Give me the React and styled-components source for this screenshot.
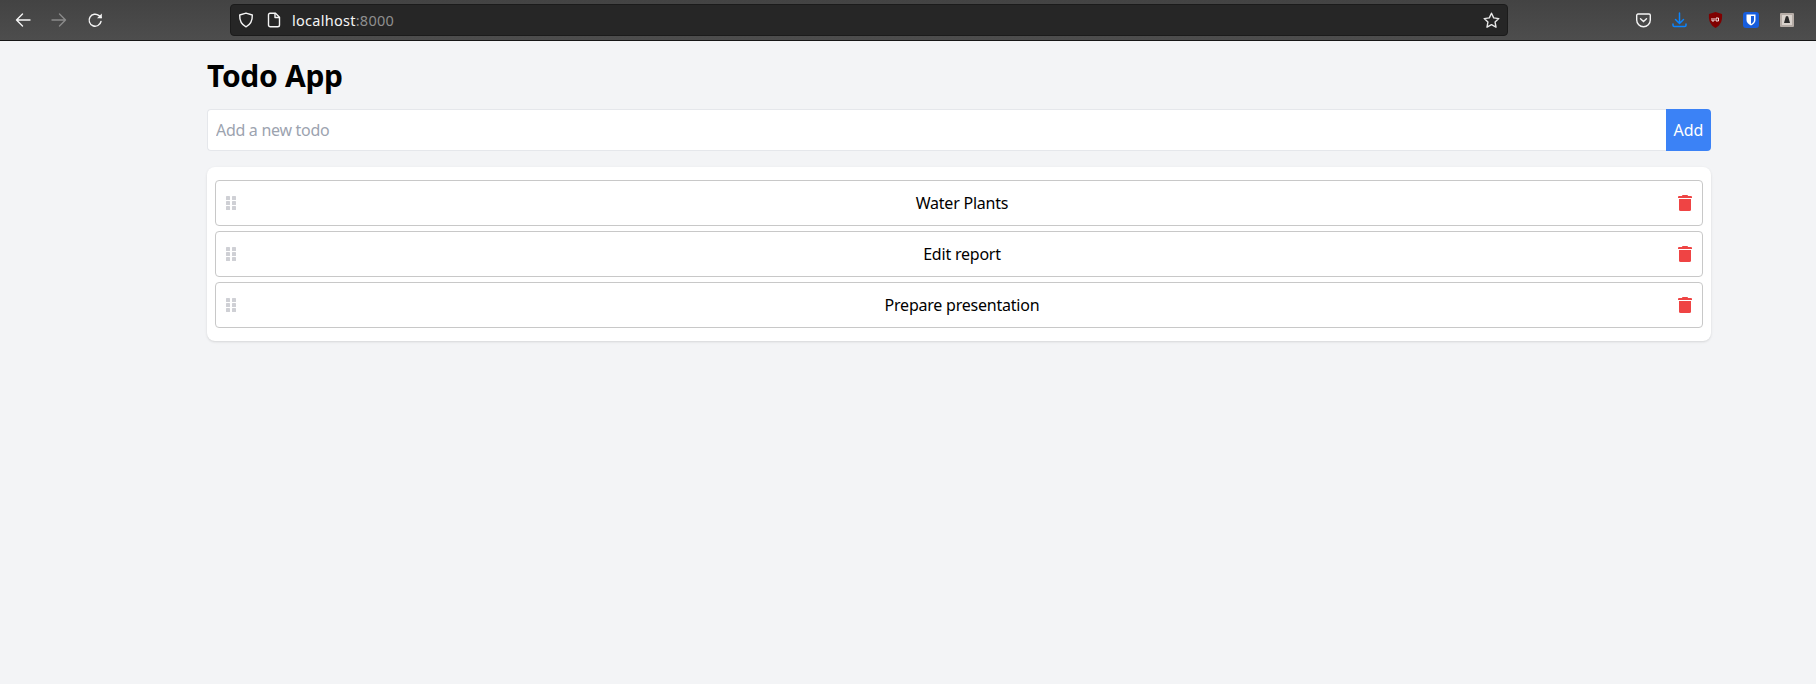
import React from "react";
import styled, { createGlobalStyle } from "styled-components";

const Global = createGlobalStyle`
  html, body { margin: 0; padding: 0; background: #f3f4f6; }
  body { font-family: "Noto Sans", "Open Sans", sans-serif; color: #000; }
  * { box-sizing: border-box; }
`;
const Page = styled.div`
  width: 1816px;
  height: 684px;
  overflow: hidden;
  background: #f3f4f6;
`;
const Toolbar = styled.div`
  height: 41px;
  display: flex;
  align-items: center;
  background: linear-gradient(#434343, #4d4d4d);
  border-bottom: 1px solid #161616;
`;
const NavGroup = styled.div`
  width: 230px;
  padding-left: 13px;
  display: flex;
  gap: 16px;
`;
const NavButton = styled.span`
  width: 20px;
  height: 20px;
  display: flex;
  align-items: center;
  justify-content: center;
  color: ${(p) => (p.$dim ? "#8a8a8a" : "#f5f5f5")};
`;
const UrlBar = styled.div`
  width: 1278px;
  height: 32px;
  background: #262626;
  border: 1px solid #1b1b1b;
  border-radius: 4px;
  display: flex;
  align-items: center;
  padding: 0 7px 0 7px;
  color: #f5f5f5;
  font-size: 14.5px;
`;
const UrlIcon = styled.span`
  display: flex;
  margin-right: ${(p) => p.$gap}px;
`;
const Host = styled.span`
  flex: 1;
  letter-spacing: 0.27px;
`;
const Port = styled.span`
  color: #8f8f8f;
`;
const Extensions = styled.div`
  flex: 1;
  display: flex;
  align-items: center;
  padding-left: 125px;
  gap: 16px;
`;
const Ext = styled.span`
  width: 20px;
  height: 20px;
  display: flex;
  align-items: center;
  justify-content: center;
`;
const Main = styled.main`
  width: 1504px;
  margin-left: 207px;
`;
const Title = styled.h1`
  margin: 0;
  padding-top: 17px;
  height: 68px;
  font-size: 30px;
  line-height: 36px;
  font-weight: 700;
  letter-spacing: -0.3px;
`;
const AddForm = styled.form`
  display: flex;
  height: 42px;
  margin-bottom: 16px;
`;
const TodoInput = styled.input`
  flex: 1;
  min-width: 0;
  border: 1px solid #e5e7eb;
  border-right: 0;
  border-radius: 4px 0 0 4px;
  background: #fff;
  padding: 0 8px;
  font: 16px "Noto Sans", sans-serif;
  letter-spacing: -0.3px;
  outline: none;
  &::placeholder { color: #9ca3af; opacity: 1; }
`;
const AddButton = styled.button`
  width: 45px;
  border: 0;
  border-radius: 0 4px 4px 0;
  background: #3b82f6;
  color: #fff;
  padding: 0;
  font: 16px "Noto Sans", sans-serif;
`;
const Card = styled.section`
  background: #fff;
  border-radius: 8px;
  box-shadow: 0 1px 3px rgba(0,0,0,.1), 0 1px 2px -1px rgba(0,0,0,.1);
  padding: 13px 8px;
  display: flex;
  flex-direction: column;
  gap: 5px;
`;
const Row = styled.div`
  height: 46px;
  display: grid;
  grid-template-columns: 30px 1fr 24px;
  align-items: center;
  border: 1px solid #c8c8c8;
  border-radius: 4px;
  padding: 0 10px;
`;
const RowText = styled.span`
  text-align: center;
  font-size: 16px;
  letter-spacing: -0.22px;
`;
const Handle = styled.svg`
  display: block;
`;
const Trash = styled.svg`
  display: block;
  justify-self: end;
`;

const GripIcon = () => (
  <Handle width="10" height="14" viewBox="0 0 10 14" fill="#cfd0d5">
    {[0, 5, 10].map((y) => [0, 6].map((x) => <rect key={`${x}-${y}`} x={x} y={y} width="4" height="4" rx="0.6" />))}
  </Handle>
);
const TrashIcon = () => (
  <Trash width="14" height="16" viewBox="0 0 14 16" fill="#ef4444">
    <path d="M4.500 0h5l.6 1H13a1 1 0 0 1 1 1v1H0V2a1 1 0 0 1 1-1h2.900z" />
    <path d="M1 4h12v10.500a1.500 1.500 0 0 1-1.500 1.500h-9A1.500 1.500 0 0 1 1 14.500z" />
  </Trash>
);

const Line = { fill: "none", stroke: "currentColor", strokeWidth: 1.4, strokeLinecap: "round", strokeLinejoin: "round" };

export default function App() {
  return (
    <Page>
      <Global />
      <Toolbar>
        <NavGroup>
          <NavButton>
            <svg width="16" height="16" viewBox="0 0 16 16" {...Line}><path d="M15 8H1.500M7.500 2 1.500 8l6 6" /></svg>
          </NavButton>
          <NavButton $dim>
            <svg width="16" height="16" viewBox="0 0 16 16" {...Line}><path d="M1 8h13.500M8.500 2l6 6-6 6" /></svg>
          </NavButton>
          <NavButton>
            <svg width="16" height="16" viewBox="0 0 16 16" {...Line}><path d="M14 9.500A6 6 0 1 1 12 3.600L14 5.500" /><path d="M14.800 1.500v4.800H10z" fill="currentColor" stroke="none" /></svg>
          </NavButton>
        </NavGroup>
        <UrlBar>
          <UrlIcon $gap={13}>
            <svg width="16" height="16" viewBox="0 0 16 16" {...Line}><path d="M8 1.200 14.300 3c.2 5.500-1.700 9.500-6.300 11.800C3.400 12.500 1.500 8.500 1.700 3z" /></svg>
          </UrlIcon>
          <UrlIcon $gap={11}>
            <svg width="14" height="16" viewBox="0 0 14 16" {...Line}><path d="M3 1.200h5.500L12.500 5.200V13a1.800 1.800 0 0 1-1.800 1.800H3.300A1.800 1.800 0 0 1 1.500 13V2.700A1.500 1.500 0 0 1 3 1.200z" /><path d="M8 1.500v4h4" /></svg>
          </UrlIcon>
          <Host>localhost<Port>:8000</Port></Host>
          <svg width="17" height="17" viewBox="0 0 17 17" {...Line} stroke="#e8e8e8"><path d="M8.500 1.200l2.200 4.700 5.100.7-3.700 3.500.9 5.100-4.500-2.500-4.500 2.500.9-5.100L1.200 6.600l5.100-.7z" /></svg>
        </UrlBar>
        <Extensions>
          <Ext>
            <svg width="15" height="15" viewBox="0 0 15 15" fill="none" stroke="#f5f5f5" strokeWidth="1.400"><path d="M2 1h11a1.300 1.300 0 0 1 1.300 1.300V7a6.800 6.800 0 0 1-13.600 0V2.300A1.300 1.300 0 0 1 2 1z" /><path d="M4.500 5.800 7.500 8.500l3-2.700" strokeLinecap="round" /></svg>
          </Ext>
          <Ext>
            <svg width="15" height="16" viewBox="0 0 15 16" fill="none" stroke="#0a84ff" strokeWidth="1.500" strokeLinecap="round"><path d="M7.500 1v10M3.500 7.500l4 4 4-4M1 12v1.300A1.200 1.200 0 0 0 2.200 14.500h10.600a1.200 1.200 0 0 0 1.200-1.200V12" /></svg>
          </Ext>
          <Ext>
            <svg width="15" height="16" viewBox="0 0 15 16"><path d="M7.500 0 14 2c.6 6-1 11-6.500 14C2 13 .4 8 1 2z" fill="#800000" /><path d="M4 6v3h2V6M8 6v3h2.500V6H8" fill="none" stroke="#f3e3e3" strokeWidth="1" /></svg>
          </Ext>
          <Ext>
            <svg width="16" height="16" viewBox="0 0 16 16"><rect width="16" height="16" rx="3" fill="#175ddc" /><path d="M3.500 2.500h9V8c0 2.500-2 4.200-4.500 5.500C5.500 12.200 3.500 10.500 3.500 8z" fill="#fff" /><path d="M8 4v8c1.800-1 3-2.300 3-4V4z" fill="#175ddc" /></svg>
          </Ext>
          <Ext>
            <svg width="14" height="14" viewBox="0 0 14 14"><rect width="14" height="14" rx="1" fill="#b5aca6" /><rect x="2" y="2" width="10" height="10" fill="#d9d2cc" /><path d="M7 3a1.500 1.500 0 0 1 1.500 1.500L10 10H4l1.500-5.500A1.500 1.500 0 0 1 7 3z" fill="#2b2b2b" /></svg>
          </Ext>
        </Extensions>
      </Toolbar>
      <Main>
        <Title>Todo App</Title>
        <AddForm onSubmit={(e) => e.preventDefault()}>
          <TodoInput placeholder="Add a new todo" />
          <AddButton type="submit">Add</AddButton>
        </AddForm>
        <Card>
          {["Water Plants", "Edit report", "Prepare presentation"].map((t) => (
            <Row key={t}>
              <GripIcon />
              <RowText>{t}</RowText>
              <TrashIcon />
            </Row>
          ))}
        </Card>
      </Main>
    </Page>
  );
}
